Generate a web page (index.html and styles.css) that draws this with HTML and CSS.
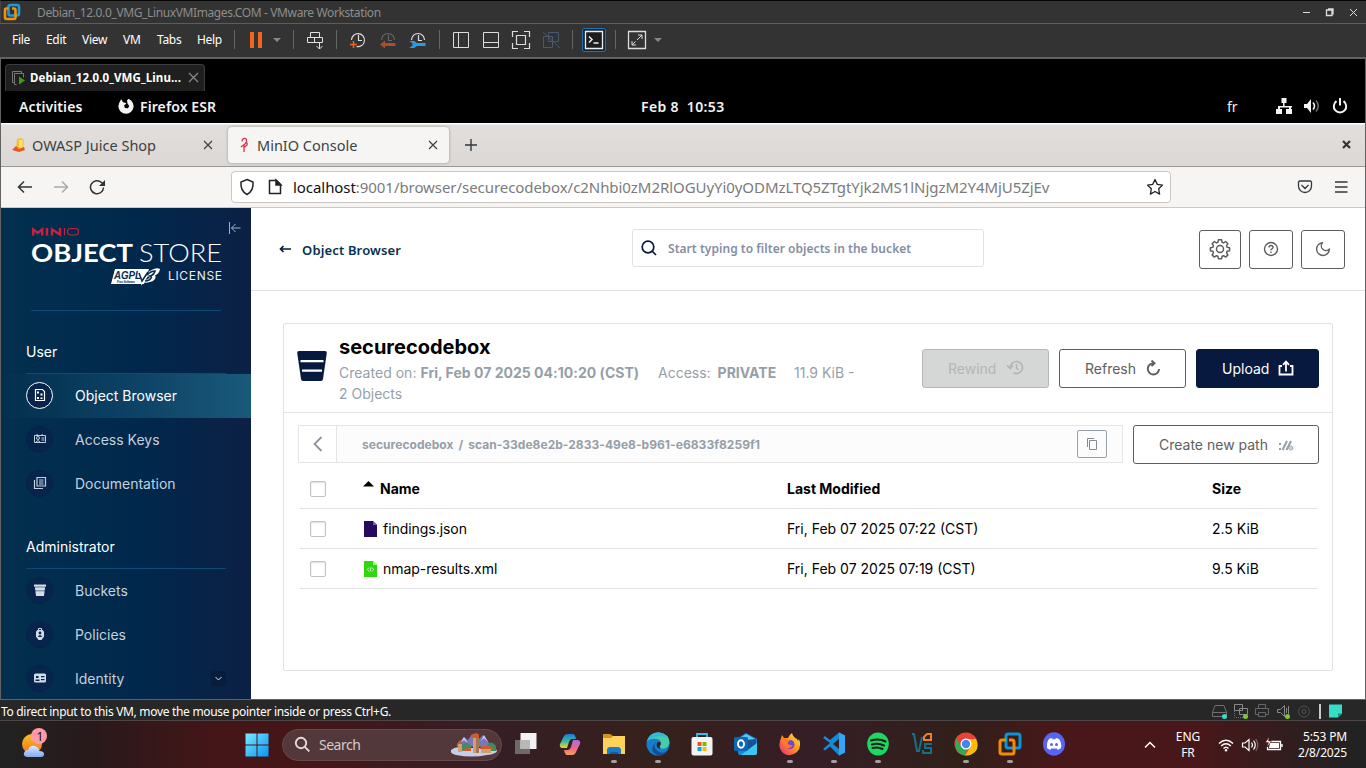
FILE: index.html
```html
<!DOCTYPE html>
<html lang="en">
<head>
<meta charset="utf-8">
<title>MinIO Console</title>
<link rel="stylesheet" href="styles.css">
</head>
<body>
<div class="screen">
<header class="titlebar">
  <svg class="vmlogo" width="18" height="18" viewBox="0 0 18 18" fill="none" stroke-width="2.6"><rect x="5.5" y="2" width="10.5" height="10.5" rx="2" stroke="#1c9ad6"/><path d="M5.5 5.5H3.500a1.500 1.500 0 0 0-1.500 1.500v7.500a1.500 1.500 0 0 0 1.500 1.500h7.500a1.500 1.500 0 0 0 1.500-1.500V7a1.500 1.500 0 0 0-1.500-1.500H9" stroke="#f29111"/></svg>
  <span class="title-text">Debian_12.0.0_VMG_LinuxVMImages.COM - VMware Workstation</span>
  <svg class="winctl" width="60" height="14" viewBox="0 0 60 14" fill="none" stroke="#ddd"><path d="M3 7.500h7"/><path d="M26.500 5h5.500v5.500h-5.500zM28 4h5v5.500" stroke-width="1.300"/><path d="M50 4l7 7M57 4l-7 7"/></svg>
</header>
<nav class="menubar">
  <span class="m-file">File</span><span class="m-edit">Edit</span><span class="m-view">View</span><span class="m-vm">VM</span><span class="m-tabs">Tabs</span><span class="m-help">Help</span>
  <i class="sep"></i>
  <svg class="tool" viewBox="0 0 20 20"><path d="M4 2h4v16H4zM12 2h4v16h-4z" fill="#f76420"/></svg>
  <svg class="caret gap" viewBox="0 0 12 20"><path d="M2 8h8l-4 4z" fill="#888"/></svg>
  <i class="sep"></i>
  <svg class="tool" viewBox="0 0 20 20" fill="none" stroke="#e0e0e0"><path d="M5.500 2.500h9v5h-9zM2.500 7.500h15v5h-15zM9.500 7.500v5M14.500 12v7M11.500 16l3 3 3-3"/></svg>
  <i class="sep"></i>
  <svg class="tool" viewBox="0 0 20 20" fill="none" stroke="#ddd" stroke-width="1.200"><path d="M3.500 10a6.500 6.500 0 1 1 5 6.500M10.500 5v5.500H14"/><path d="M5.500 11v7M2 14.500h7" stroke="#f76420" stroke-width="1.500"/></svg>
  <svg class="tool" viewBox="0 0 20 20" fill="none" stroke="#666" stroke-width="1.200"><path d="M3.500 10a6.500 6.500 0 1 1 13 0M10.500 5v5.500H14"/><path d="M6 14.500h11.500" stroke="#a8502c" stroke-width="3"/><path d="M2 14.500l5-4v8z" fill="#a8502c" stroke="none"/></svg>
  <svg class="tool" viewBox="0 0 20 20" fill="none" stroke="#ddd" stroke-width="1.200"><path d="M3.500 10a6.500 6.500 0 1 1 13 0M10.500 5v5.500H14"/><path d="M7 14.500h10.500" stroke="#2c9be0" stroke-width="3"/><path d="M3 11.500h3l2 1.500v3l-2 1.500H3l2-1.500v-3z" fill="#2c9be0" stroke="#2c9be0"/></svg>
  <i class="sep"></i>
  <svg class="tool" viewBox="0 0 20 20" fill="none" stroke="#ddd"><path d="M2.500 2.500h15v15h-15zM7.500 2.500v15"/></svg>
  <svg class="tool" viewBox="0 0 20 20" fill="none" stroke="#ddd"><path d="M2.500 2.500h15v15h-15zM2.500 12.500h15"/></svg>
  <svg class="tool" viewBox="0 0 20 20" fill="none" stroke="#ddd" stroke-width="1.200"><path d="M5.500 5.500h9v9h-9zM1.500 7V1.500H7M13 1.500h5.500V7M18.500 13v5.500H13M7 18.500H1.500V13"/></svg>
  <svg class="tool" viewBox="0 0 20 20" fill="none" stroke="#49586a"><path d="M7.500 2.500h10v9h-10zM2.500 6.500h9v11h-9zM2 2l17 16"/></svg>
  <i class="sep"></i>
  <svg class="tool wide" viewBox="0 0 26 26" fill="none" stroke="#eee"><rect x="1.500" y="1.500" width="23" height="23" rx="1.500" fill="#102638" stroke="#1f6fad"/><path d="M4.500 4.500h17v17h-17z" fill="#1d1d1d" stroke-width="1.300"/><path d="M8 9.500l3 3-3 3M12.500 16h5" stroke-width="1.500"/></svg>
  <i class="sep"></i>
  <svg class="tool" viewBox="0 0 20 20" fill="none" stroke="#ddd"><path d="M1.500 1.500h17v17h-17z" stroke-width="1.300"/><path d="M5 11v4h4M11 5h4v4M5 15l3.500-3.500M15 5l-5 5"/></svg>
  <svg class="caret" viewBox="0 0 12 20"><path d="M2 8h8l-4 4z" fill="#888"/></svg>
</nav>

<div class="vm">
<div class="vmtabs"><div class="vmtab">
  <svg width="16" height="16" viewBox="0 0 16 16" fill="none" stroke="#777"><path d="M3.500 12.500h-2v-11h9v2M5.500 14.500h-2v-11h9v4"/><path d="M8 6.500l6 4-6 4z" fill="#3f9b12" stroke="none"/></svg>
  <b>Debian_12.0.0_VMG_Linu...</b>
  <svg width="11" height="11" viewBox="0 0 11 11" stroke="#888" stroke-width="1.300"><path d="M1 1l9 9M10 1l-9 9"/></svg>
</div></div>
<div class="gnome">
  <b class="g-act">Activities</b>
  <svg width="16" height="16" viewBox="0 0 16 16"><circle cx="8" cy="8.200" r="7.600" fill="#f2f2f2"/><path d="M3.500 0L4.500 4 8.500 5.200 6 7.500 7 10l3 .2 1.200-2.200L9.500 5.500 9 2.500 11 0z" fill="#000"/><path d="M3 1l1.500 3L2 5z" fill="#f2f2f2"/></svg>
  <b class="g-app">Firefox ESR</b>
  <b class="g-date">Feb 8&nbsp; 10:53</b>
  <span class="g-lang">fr</span>
  <svg class="g-tray" width="72" height="16" viewBox="0 0 72 16" fill="#f3f3f3"><path d="M5.500 0h5v5h-2v3H16v1.500h-1V11h1v5h-6v-5h3V9.500H4V11h2v5H0v-5h2V8h5V5H5.500z"/><path d="M28 6h3l4-5v14l-4-5h-3z"/><path d="M37 4.500q3 3.500 0 7" fill="none" stroke="#f3f3f3" stroke-width="1.600"/><path d="M40 2.500q4.500 5.500 0 11" fill="none" stroke="#666" stroke-width="1.600"/><path d="M60.500 3.200a6.200 6.200 0 1 0 7 0M64 0v7.500" fill="none" stroke="#f3f3f3" stroke-width="2"/></svg>
</div>

<div class="fftabs">
  <div class="tab">
    <svg width="16" height="16" viewBox="0 0 16 16"><path d="M6 2l4-1 3 2-1 9H5z" fill="#f5c02e"/><path d="M8 3v7l3 1 1-8z" fill="#ffe46a"/><path d="M1 13l4-4 3 3 5-2 1 3-6 2z" fill="#e2582c"/></svg>
    <span class="tab-a">OWASP Juice Shop</span>
    <svg width="10" height="10" viewBox="0 0 10 10" stroke="#3c4144" stroke-width="1.200"><path d="M1 1l8 8M9 1L1 9"/></svg>
  </div>
  <div class="tab active">
    <svg width="16" height="16" viewBox="0 0 16 16" fill="none" stroke="#d73352"><path d="M6 4.500q0-2.500 2-3t2.500 1.500-1 3.500L5 10M9 6q3-1 2 2l-3 2.500M8 8v7" stroke-width="1.300"/></svg>
    <span class="tab-b">MinIO Console</span>
    <svg width="10" height="10" viewBox="0 0 10 10" stroke="#3c4144" stroke-width="1.200"><path d="M1 1l8 8M9 1L1 9"/></svg>
  </div>
  <svg class="newtab" width="12" height="12" viewBox="0 0 12 12" stroke="#33393b" stroke-width="1.400"><path d="M6 0v12M0 6h12"/></svg>
  <svg class="ffclose" width="9" height="9" viewBox="0 0 9 9" stroke="#2e3436" stroke-width="2.200"><path d="M1 1l7 7M8 1L1 8"/></svg>
</div>
<div class="fftools">
  <svg width="90" height="16" viewBox="0 0 90 16" fill="none" stroke="#2e3436" stroke-width="1.500"><path d="M15 8H1.500M7 2.500L1.500 8 7 13.500"/><path d="M37 8h13.500M45 2.500L50.500 8 45 13.500" stroke="#aaa"/><path d="M86.500 8.500a6.500 6.500 0 1 1-2-5l2 1.500"/><path d="M88 1v6h-6z" fill="#2e3436" stroke="none"/></svg>
  <div class="url">
    <svg width="44" height="18" viewBox="0 0 44 18" fill="none" stroke="#222" stroke-width="1.500"><path d="M8 1.500l6 2.500c.5 5-1.500 10-6 12.500C3.500 14 1.500 9 2 4z"/><path d="M30.500 2.500h7l4 4v9h-11z"/><path d="M37 2v5h5z" fill="#222"/></svg>
    <span class="url-text"><em>localhost</em>:9001/browser/securecodebox/c2Nhbi0zM2RlOGUyYi0yODMzLTQ5ZTgtYjk2MS1lNjgzM2Y4MjU5ZjEv</span>
    <svg class="star" width="18" height="18" viewBox="0 0 18 18" fill="none" stroke="#222" stroke-width="1.300" stroke-linejoin="round"><path d="M9 1.500l2.300 4.900 5.200.7-3.800 3.700.9 5.300L9 13.500l-4.600 2.600.9-5.300L1.500 7.100l5.200-.7z"/></svg>
  </div>
  <svg class="pocket" width="54" height="16" viewBox="0 0 54 16" fill="none" stroke="#33393b" stroke-width="1.300"><path d="M2.500 2h11l1 1v4a6.500 6.500 0 0 1-13 0V3zM4.500 6L8 9.500 11.500 6"/><path d="M38 3h12.500M38 8h12.500M38 13h12.500"/></svg>
</div>

<div class="console">
<aside class="side">
  <svg class="brand" width="210" height="70" viewBox="0 0 210 70">
    <g fill="none" stroke="#c9203f" stroke-width="2.400"><path d="M2.200 17.500V11.500l4.500 3.500 4.500-3.500v6M16 10v7.500M21 17.500v-6l8 5V10"/><path d="M33.500 10v7.500" stroke-width="1"/><rect x="36.500" y="10.500" width="11" height="6.500" rx="3.200" stroke-width="1.200"/></g>
    <text x="0" y="44" class="lg-bold" textLength="102" lengthAdjust="spacingAndGlyphs">OBJECT</text>
    <text x="108" y="44" class="lg-thin" textLength="83" lengthAdjust="spacingAndGlyphs">STORE</text>
    <path d="M84 51h34l-5 15H80z" fill="#fff"/>
    <text x="83" y="61" class="lg-ag" textLength="27" lengthAdjust="spacingAndGlyphs">AGPL</text><text x="86" y="65.300" class="lg-fs" textLength="18">Free Software</text>
    <path d="M110 54l1 11 8-11q6-4 9-2.500-1 4-5 5.500 2 3-2 5.500-5 2-9 1 7-1 8-5l-3-1" fill="#fff" stroke="#fff" stroke-width="1.800"/><path d="M108 55l3 8 6-9M116 57q4-4 8-4-1 4-5 5 3 1-1 4-2 1-4 1" fill="none" stroke="#062c50" stroke-width="1.600"/>
    <text x="137" y="62" class="lg-lic" textLength="54">LICENSE</text>
    <path d="M198.500 4v12M209.500 10h-9M204.500 6l-4 4 4 4" fill="none" stroke="#9fb3c5"/>
  </svg>
  <div class="rule"></div>
  <div class="group first">User</div>
  <div class="item on"><i class="dot"><svg viewBox="0 0 14 14" fill="none" stroke="#fff" stroke-width="1.200"><path d="M2.500 1.500h7l2 2v9h-9z"/><path d="M4 3.500h2v2H4zM7.500 5.500h2v2h-2zM4 9h2v2H4zM7.500 9.500h2v1.500h-2z" fill="#fff" stroke="none"/></svg></i><span>Object Browser</span></div>
  <div class="item"><i class="dot"><svg viewBox="0 0 14 14" fill="none" stroke="#c4d0dc"><path d="M1.500 3.500h11v7h-11zM4 2v2M9 2v2M8.500 6h3M8.500 8h3"/><circle cx="5" cy="6" r="1.500"/><path d="M3 10q2-3 4 0"/></svg></i><span>Access Keys</span></div>
  <div class="item"><i class="dot"><svg viewBox="0 0 14 14" fill="none" stroke="#c4d0dc" stroke-width="1.200"><path d="M4 1.500h8.500v8.500H4zM1.500 4v8.500H10M6 4h4.500M6 6h4.500M6 8h4.500"/></svg></i><span>Documentation</span></div>
  <div class="group second">Administrator</div>
  <div class="item"><i class="dot"><svg viewBox="0 0 14 14" fill="#d3dde7"><path d="M1 1.500h12v2.200H1z"/><path d="M2 3.700h10l-1 9.300H3z" opacity=".65"/><path d="M2 4.700h10l-.3 2.300H2.300zM2.600 8.500h8.800L10.900 13H3.100z"/></svg></i><span>Buckets</span></div>
  <div class="item"><i class="dot"><svg viewBox="0 0 14 14"><path d="M5.500 3.500V1.500h3v2" fill="none" stroke="#d3dde7"/><path d="M3 4.500L4.500 3h5L11 4.500v5L8.500 13h-3L3 9.500z" fill="#d3dde7"/><circle cx="7" cy="6" r="1.400" fill="#07244c"/><path d="M4.800 10q2.200-4 4.400 0z" fill="#07244c"/></svg></i><span>Policies</span></div>
  <div class="item"><i class="dot"><svg viewBox="0 0 14 14"><rect x="1" y="2.500" width="12" height="9" rx="1.500" fill="#d3dde7"/><path d="M3 5h2.500v2H3zM2.500 8.500h4V10h-4zM8 5h3.500v1.200H8zM8 8h3.500v1.200H8z" fill="#07244c"/></svg></i><span>Identity</span><i class="more"><svg width="9" height="9" viewBox="0 0 9 9" fill="none" stroke="#dce5ee"><path d="M1.500 3l3 3 3-3"/></svg></i></div>
</aside>
<main class="main">
  <div class="pagehead">
    <svg width="14" height="12" viewBox="0 0 14 12" fill="none" stroke="#07193e" stroke-width="1.700"><path d="M13 6H2.500M5.500 3l-3 3 3 3"/></svg>
    <b class="crumb">Object Browser</b>
    <div class="search"><svg width="18" height="18" viewBox="0 0 18 18" fill="none" stroke="#07193e" stroke-width="1.700"><circle cx="7" cy="8" r="5.800"/><path d="M11 12l4 4"/></svg><b>Start typing to filter objects in the bucket</b></div>
    <div class="ibtn b1"><svg width="22" height="22" viewBox="0 0 22 22" fill="none" stroke="#5e5e5e" stroke-width="1.500" stroke-linejoin="round"><path d="M9.400 1.800h3.200l.5 2.500 1.500.6 2.100-1.400 2.200 2.200-1.400 2.100.6 1.500 2.500.5v3l-2.500.5-.6 1.500 1.400 2.100-2.200 2.200-2.100-1.400-1.500.6-.5 2.400H9.400l-.5-2.400-1.500-.6-2.100 1.400-2.200-2.200 1.400-2.100-.6-1.500-2.500-.5v-3l2.500-.5.6-1.500-1.400-2.100 2.200-2.200 2.100 1.400 1.500-.6z"/><circle cx="11" cy="11" r="3.500"/></svg></div>
    <div class="ibtn"><svg width="16" height="16" viewBox="0 0 16 16" fill="none" stroke="#5e5e5e" stroke-width="1.400"><circle cx="8" cy="8" r="6.500"/><path d="M6 6.500Q6 4.500 8 4.500t2 2Q10 7.500 8 8.500v.8M8 10.500v1.500"/></svg></div>
    <div class="ibtn"><svg width="16" height="16" viewBox="0 0 16 16" fill="none" stroke="#5e5e5e" stroke-width="1.400" stroke-linejoin="round"><path d="M7.500 1.700A6.400 6.400 0 1 0 14.400 8 4.200 4.200 0 0 1 7.500 1.700z"/></svg></div>
  </div>
  <section class="card">
    <div class="cardhead">
      <svg class="bucket" width="30" height="30" viewBox="0 0 30 30"><path d="M2 0h26q2 0 1.800 2L26 28q-.3 2-2 2H6q-1.700 0-2-2L.2 2Q0 0 2 0z" fill="#07193e"/><path d="M3.500 10.200h23M5 19.700h20" stroke="#fff" stroke-width="2.200"/></svg>
      <div class="info"><h1>securecodebox</h1>
        <p><span class="i-cr">Created on: <b>Fri, Feb 07 2025 04:10:20 (CST)</b></span><span class="i-ac">Access: <b>PRIVATE</b></span><span>11.9 KiB -</span></p><p>2 Objects</p></div>
      <div class="btn off"><span>Rewind</span><svg width="18" height="16" viewBox="0 0 18 16" fill="none" stroke="#b4b5b5" stroke-width="1.700"><path d="M4.500 7.500a6 6 0 1 1 3 5.200M1 5.500L4.500 8.500 7 5.500M10.500 4v4l2 2"/></svg></div>
      <div class="btn"><span>Refresh</span><svg width="16" height="16" viewBox="0 0 16 16" fill="none" stroke="#5e5e5e" stroke-width="1.900"><path d="M9 3.300a5.600 5.600 0 1 0 5 5.700M6.500.5l3 2.800-3 2.800"/></svg></div>
      <div class="btn up"><span>Upload</span><svg width="16" height="16" viewBox="0 0 16 16" fill="none" stroke="#fff" stroke-width="1.800"><path d="M4 6H1.500v8.500h13V6H12M8 11.500V2M5 4.800L8 1.600l3 3.200"/></svg></div>
    </div>
    <div class="pathrow">
      <div class="path"><div class="back"><svg width="10" height="16" viewBox="0 0 10 16" fill="none" stroke="#8b949d" stroke-width="1.800"><path d="M8.500 1L1.500 8l7 7"/></svg></div><b>securecodebox<i>/</i>scan-33de8e2b-2833-49e8-b961-e6833f8259f1</b>
      <div class="copy"><svg width="12" height="14" viewBox="0 0 12 14" fill="none" stroke="#858b95"><path d="M3.500 3.500h7v9h-7zM1.500 10V1.500H8"/></svg></div></div>
      <div class="btn newpath"><span>Create new path</span><svg width="16" height="12" viewBox="0 0 16 12" fill="none" stroke="#969fa8"><path d="M1 5h2M1 10h2" stroke-width="2"/><path d="M4.500 11l4.500-9M8.500 11L13 2" stroke-width="2"/><circle cx="12.800" cy="9" r="2"/><path d="M11.800 9h2"/></svg></div>
    </div>
    <div class="table">
      <div class="row head"><i class="cb"></i><span class="c-name"><svg width="12" height="6" viewBox="0 0 12 6"><path d="M0 5.500L5.500 0 11 5.500z"/></svg><b>Name</b></span><b class="c-mod">Last Modified</b><b>Size</b></div>
      <div class="row"><i class="cb"></i><span class="c-name"><svg width="14" height="16" viewBox="0 0 14 16"><path d="M0 0h9l4 4v12H0z" fill="#25095f"/><path d="M9 0v4h4z" fill="#7858b6"/></svg><span>findings.json</span></span><span class="c-mod">Fri, Feb 07 2025 07:22 (CST)</span><span>2.5 KiB</span></div>
      <div class="row"><i class="cb"></i><span class="c-name"><svg width="14" height="16" viewBox="0 0 14 16"><path d="M0 0h9l4 4v12H0z" fill="#31d610"/><path d="M9 0v4h4z" fill="#a2f37f"/><path d="M5 6.500L3.500 8.500 5 10.500M8 6.500l1.500 2L8 10.500M7 6.500l-1 4" fill="none" stroke="#d9ffd0" stroke-width=".8"/></svg><span>nmap-results.xml</span></span><span class="c-mod">Fri, Feb 07 2025 07:19 (CST)</span><span>9.5 KiB</span></div>
    </div>
  </section>
</main>
</div>
</div>

<div class="status"><span>To direct input to this VM, move the mouse pointer inside or press Ctrl+G.</span>
  <svg width="134" height="18" viewBox="0 0 134 18" fill="none" stroke="#707070"><path d="M.5 14.500v-4l2.500-7h9l2.500 7v4zM.5 10.500h14"/><circle cx="12.500" cy="14.500" r="2.500" fill="#35dccb" stroke="none"/><path d="M22.500 2.500h8v6h-8zM27.500 6.500h8v6h-8z" stroke="#888"/><path d="M22.500 9v6.500H32" stroke-dasharray="1 1"/><circle cx="33.500" cy="14.500" r="2.500" fill="#83c623" stroke="none"/><path d="M46.500 6.500v-4h7v4M46 12.500h-2.500v-6h13v6H54M46.500 10.500h7v4h-7z" stroke="#666"/><path d="M65.500 7.500h3l4-4v11l-4-4h-3zM74.500 6v5M76.500 4v8" stroke="#888"/><circle cx="75.500" cy="14.500" r="2.500" fill="#83c623" stroke="none"/><circle cx="92" cy="9.500" r="5.500" stroke="#555"/><circle cx="92" cy="9.500" r="2" stroke="#555"/><path d="M108 2v15" stroke="#fff" stroke-width="1.500"/><path d="M117 2.500h13v9l-4 4h-9z" fill="#38ddc9" stroke="none"/><path d="M126 15.500v-4h4z" fill="#26877e" stroke="none"/></svg>
</div>
<footer class="taskbar">
  <svg class="weather" width="32" height="34" viewBox="0 0 32 34"><defs><linearGradient id="sun" x2="0" y2="1"><stop stop-color="#f8bd2b"/><stop offset="1" stop-color="#ef7818"/></linearGradient><linearGradient id="cl" x2="0" y2="1"><stop stop-color="#d7e8ff"/><stop offset="1" stop-color="#83aaf0"/></linearGradient></defs><circle cx="14" cy="17" r="10" fill="url(#sun)"/><path d="M9 30q-4-1-3-4t4-3q2-5 7-4 4 1 4 5 5 0 5 3t-3 3z" fill="url(#cl)"/><circle cx="21" cy="9" r="8" fill="#ff99a4"/><text x="22" y="13.500" text-anchor="middle" class="badge-n">1</text></svg>
  <svg class="start" width="24" height="24" viewBox="0 0 24 24"><defs><linearGradient id="win" x2="1" y2="1"><stop stop-color="#78eaff"/><stop offset="1" stop-color="#0a93f5"/></linearGradient></defs><path d="M.5.500h11v11H.5zM12.500.500h11v11h-11zM.5 12.500h11v11H.5zM12.500 12.500h11v11h-11z" fill="url(#win)"/></svg>
  <div class="tsearch"><svg width="17" height="17" viewBox="0 0 17 17" fill="none" stroke="#e4dcdc" stroke-width="1.900"><circle cx="7" cy="7" r="5.200"/><path d="M10.800 10.800l4.500 4.500"/></svg><span>Search</span>
    <svg class="castle" width="48" height="24" viewBox="0 0 48 24"><path d="M6 13l8-9 4 3 4-6 6 6 5-5 5 6 3 6z" fill="#7777ba"/><path d="M14 4l4 6-4-3-3 2zM34 2l4 7-4-4-3 3z" fill="#cfccf5"/><path d="M1 17q5-4 10-2h26q9-1 10 3-1 3-10 4-15 3-31 0Q0 21 1 17z" fill="#c5d0e8"/><path d="M12 12q5-5 9 1v5h-9zM37 13q4-7 9 0v5h-9z" fill="#3d8d61"/><path d="M23 3h6v17h-6zM31 15h10v5H31zM8 11h4v8H8z" fill="#d29e6e"/><path d="M26 3h3v17h-3z" fill="#a37552"/><path d="M22 5V1.500l4-1.500 3 1.500V5zM7 11l3-4 3 4zM29 16l3-3h8l3 3zM12 18l4-3h5v3z" fill="#d35a2c"/></svg>
  </div>
  <div class="apps">
    <div class="app"><svg viewBox="0 0 24 24"><path d="M1 8h15v14H1z" fill="#6b6b69"/><path d="M6.500 1h16v16h-16z" fill="#f2f2f2"/><path d="M6.500 8H16v9H6.500z" fill="#b8b8b8"/></svg></div>
    <div class="app"><svg viewBox="0 0 24 24"><defs><linearGradient id="ca" x2="0" y2="1"><stop stop-color="#1d7be0"/><stop offset=".5" stop-color="#35b9a0"/><stop offset="1" stop-color="#eed42c"/></linearGradient><linearGradient id="cb" x2="0" y2="1"><stop stop-color="#a56be6"/><stop offset=".5" stop-color="#ee6390"/><stop offset="1" stop-color="#f6a057"/></linearGradient></defs><path d="M6 4q1-2 4-2h5q2 0 3 5h-4q-2 0-3 3l-2 6H4q-3-1-2-4z" fill="url(#ca)"/><path d="M18 20q-1 3-4 3H9q-2 0-3-5h4q2 0 3-3l2-7h5q3 1 2 4z" fill="url(#cb)"/></svg></div>
    <div class="app run"><svg viewBox="0 0 24 24"><path d="M1 2h7l3 2h12v18H1z" fill="#d69518"/><path d="M1 6h8l2-2h12v18H1z" fill="#fed15b"/><path d="M5 22v-5l2-2h10l2 2v5z" fill="#177dce"/><path d="M8 20h8v2H8z" fill="#0f5da7"/></svg></div>
    <div class="app run"><svg viewBox="0 0 24 24"><circle cx="12" cy="12" r="11.500" fill="#177cc9"/><path d="M1 9Q4 0 13 .500q10 1 10.500 10-1 7-8 6-3-1-1-3Q16 8 11 7 5 6 1 9z" fill="#43cda8"/><path d="M1 9Q4 1 12 .500q6 0 9 5Q11 2 1 9z" fill="#35b6df"/><path d="M10 10q-4 6 3 10 5 2 9-2-4 7-11 5Q2 19 10 10z" fill="#134e94"/><path d="M11 11q3-3 4 1-3 3 0 5-6-1-4-6z" fill="#342027"/></svg></div>
    <div class="app"><svg viewBox="0 0 24 24"><path d="M7 6V2h10v4" fill="none" stroke="#38bdeb" stroke-width="1.800"/><rect x="1.500" y="5" width="21" height="18.500" rx="2" fill="#f3f3f3"/><path d="M7.500 10h4v4h-4z" fill="#f25022"/><path d="M12.500 10h4v4h-4z" fill="#7fba00"/><path d="M7.500 15h4v4h-4z" fill="#00a4ef"/><path d="M12.500 15h4v4h-4z" fill="#ffb900"/></svg></div>
    <div class="app"><svg viewBox="0 0 24 24"><path d="M4 6l8-5 11 6v14q0 2-2 2H6q-2 0-2-2z" fill="#1687d9"/><path d="M6 6l6-4 9 5v5H6z" fill="#58c9f3"/><path d="M12 8l10-1v6l-8 5z" fill="#185292"/><path d="M7 23l16-12v10q0 2-2 2z" fill="#3ac8ef"/><rect y="5" width="14" height="14" rx="1.500" fill="#0d67b8"/><ellipse cx="7" cy="12" rx="3" ry="3.800" fill="none" stroke="#fff" stroke-width="1.900"/></svg></div>
    <div class="app run"><svg viewBox="0 0 24 24"><defs><linearGradient id="fx" x1="1" x2="0" y2="1"><stop stop-color="#fff04c"/><stop offset=".45" stop-color="#ff981f"/><stop offset="1" stop-color="#ed207b"/></linearGradient></defs><path d="M3 6l1-3 2 3 4 0q1-3 4-5 1 4 5 6l1 2 1-2q3 8-2 13-7 6-14 1-6-6-2-15z" fill="url(#fx)"/><circle cx="12" cy="12.500" r="4.500" fill="#7347cd"/><path d="M4 8q4-3 8 1-3 1-2 3 2 2 5 1-3 5-8 2-3-3-3-7z" fill="#ff7928"/></svg></div>
    <div class="app run"><svg viewBox="0 0 24 24"><path d="M17 .500l6 3v17l-6 3-9-9-5 4-2-1.500L8 11 1 6l2-2 5 4zM17 7l-6 5 6 5z" fill="#168ad3" fill-rule="evenodd"/><path d="M17 .500l6 3v17l-6 3z" fill="#36a4ef"/></svg></div>
    <div class="app run"><svg viewBox="0 0 24 24" fill="none"><ellipse cx="12" cy="12" rx="10.800" ry="11.500" fill="#1ed760"/><path d="M5 8.500q8-2.500 14.500 1M6 12.500q6-2 12 1M6.500 16q5-1.500 10 1" stroke="#171d1a" stroke-width="2" stroke-linecap="round"/></svg></div>
    <div class="app"><svg viewBox="0 0 24 24" fill="none" stroke-width="2"><path d="M2 2H4l3 17h2l3-14M22 12h-7v4h6v5h-8v-3" stroke="#167083"/><path d="M14 8V5l3-3h4v6z" stroke="#eb8325"/></svg></div>
    <div class="app run"><svg viewBox="0 0 24 24"><circle cx="12" cy="12" r="11.500" fill="#ea4335"/><path d="M2 6l5 8 6 3-2 6.500Q-2 21 2 6z" fill="#34a853"/><path d="M22 7q5 12-6 16l-5 .5L17 14q0-4-5-7z" fill="#fbbc05"/><circle cx="12" cy="12" r="5.500" fill="#fff"/><circle cx="12" cy="12" r="4.200" fill="#4285f4"/></svg></div>
    <div class="app run"><svg viewBox="0 0 24 24" fill="none" stroke-width="3"><rect x="8" y="2" width="14" height="14" rx="2" stroke="#0796d6"/><path d="M8 8H4q-2 0-2 2v10q0 2 2 2h10q2 0 2-2V10q0-2-2-2h-3" stroke="#f38b00"/></svg></div>
    <div class="app"><svg viewBox="0 0 24 24"><ellipse cx="12" cy="12" rx="11" ry="11.800" fill="#5865f2"/><path d="M8 6.500l2-.5.7 1.200h2.600L14 6l3 1q3 4 2 9l-3 2-1.200-1.500h-5.600L8 18l-3-2Q4.500 10 7 7z" fill="#fff"/><circle cx="9.500" cy="12.500" r="1.500" fill="#5865f2"/><circle cx="14.500" cy="12.500" r="1.500" fill="#5865f2"/></svg></div>
  </div>
  <svg class="chev" width="12" height="8" viewBox="0 0 12 8" fill="none" stroke="#fff" stroke-width="1.500"><path d="M1 6.500l5-5 5 5"/></svg>
  <div class="lang">ENG<br>FR</div>
  <svg class="tray" width="66" height="18" viewBox="0 0 66 18" fill="none" stroke="#fff" stroke-width="1.500"><path d="M1 7.500q7-6.500 14 0M3.200 10q4.800-4.500 9.600 0M5.500 12.500q2.500-2.500 5 0"/><circle cx="8" cy="14.300" r="1.200" fill="#fff" stroke="none"/><path d="M24.500 7h2.500l4-3.500v11L27 11h-2.500zM33.500 6.500q2 2.500 0 5M35.500 4.500q3.500 4.500 0 9" stroke-width="1.200"/><path d="M37.800 3q4 6 0 12" stroke="#8b6262" stroke-width="1.200"/><path d="M53 5.500h9.500v8h-13V11M64 8v3" stroke-width="1.300"/><path d="M52 7h9v5H51z" fill="#fff" stroke="none"/><path d="M51 1l-3.500 5.500h3L49 11l4.500-6h-3z" fill="#fff" stroke="#501a1d" stroke-width=".5"/></svg>
  <div class="clock">5:53 PM<br>2/8/2025</div>
</footer>
</div>
</body>
</html>
```
FILE: styles.css
```css
* { box-sizing: border-box; }
body { margin: 0; background: #000; }
i, em { font-style: normal; }
svg { display: block; flex: none; }
.screen { width: 1366px; height: 768px; overflow: hidden; display: flex; flex-direction: column; white-space: nowrap; font-family: "Noto Sans", "Open Sans", sans-serif; }
.titlebar { height: 23px; flex: none; background: #333; border-top: 1px solid #050505; border-left: 1px solid #444; display: flex; align-items: center; padding: 0 6px 0 2px; font-size: 12px; color: #8d8d8d; }
.title-text { margin-left: 16px; letter-spacing: -.38px; flex: 1; }
.menubar { height: 34px; flex: none; background: #333; border-top: 1px solid #5d5d5d; display: flex; align-items: center; padding: 0 0 2px 12px; font-size: 12px; color: #fff; letter-spacing: -.3px; }
.menubar span { flex: none; }
.m-file { width: 34px; }
.m-edit { width: 36px; }
.m-view { width: 41px; }
.m-vm { width: 34px; }
.m-tabs { width: 40px; }
.m-help { width: 31px; }
.sep { width: 1px; height: 19px; background: #666; margin: 0 6px; flex: none; }
.tool { width: 20px; height: 20px; margin: 0 5px; }
.tool.wide { width: 26px; height: 26px; margin: 0 2px; }
.caret { width: 12px; height: 20px; }
.caret.gap { margin-right: 4px; }
.vm { flex: 1; min-height: 0; background: #000; border: solid #626262; border-width: 2px 1px 1px; display: flex; flex-direction: column; }
.vmtabs { height: 32px; flex: none; padding: 5px 0 0 4px; }
.vmtab { width: 200px; height: 27px; background: #1f1f1f; border: 1px solid #3c3c3c; border-bottom: 0; border-radius: 4px 4px 0 0; display: flex; align-items: center; padding: 0 0 1px 5px; color: #fff; font-size: 11.5px; }
.vmtab b { width: 161px; padding-left: 3px; letter-spacing: .1px; }
.gnome { height: 32px; flex: none; display: flex; align-items: center; padding: 0 0 2px 18px; font-size: 14px; color: #f3f3f3; }
.gnome b { font-weight: 600; flex: none; letter-spacing: .1px; }
.gnome .g-act { width: 99px; }
.gnome .g-app { width: 507px; padding-left: 6px; }
.gnome .g-date { width: 586px; letter-spacing: .35px; }
.g-lang { width: 27px; }
.g-tray { margin-left: 22px; }
.fftabs { height: 44px; flex: none; background: linear-gradient(#fff 1px, #e1dedb 2px, #dcd8d5); border-bottom: 1px solid #9b9794; display: flex; align-items: center; color: #3c4245; font-size: 14.5px; }
.tab { width: 227px; height: 36px; display: flex; align-items: center; padding-left: 10px; flex: none; }
.tab-a, .tab-b { width: 171px; margin-left: 5px; }
.tab.active { width: 221px; background: #f6f5f4; border-radius: 4px; box-shadow: 0 0 3px #99948f; padding-left: 8px; }
.newtab { margin-left: 16px; }
.ffclose { margin-left: auto; margin-right: 14px; }
.fftools { height: 41px; flex: none; background: #f6f5f4; border-bottom: 1px solid #cdc7c2; display: flex; align-items: center; padding-left: 16px; }
.url { width: 940px; height: 32px; margin-left: 124px; background: #fff; border: 1px solid #cdc7c2; border-radius: 4px; display: flex; align-items: center; padding-left: 7px; font-size: 15px; color: #7b7b7b; }
.url em { color: #111; }
.url-text { width: 863px; margin-left: 10px; letter-spacing: -.06px; flex: none; }
.star { margin-left: -10px; }
.pocket { margin-left: 126px; }
.console { flex: 1; min-height: 0; display: flex; font-family: Inter, Roboto, sans-serif; background: #fff; }
.side { width: 250px; flex: none; overflow: hidden; background: linear-gradient(90deg, #03304f, #00284c 55%, #0c2045); color: #c4d0dc; font-size: 14px; padding-top: 10px; }
.brand { margin-left: 30px; }
.lg-bold { font: 700 25px Lato, sans-serif; fill: #fff; }
.lg-thin { font: 300 25px Lato, sans-serif; fill: #fff; }
.lg-ag { font: italic 700 11px "Liberation Sans", sans-serif; fill: #062c50; }
.lg-fs { font: italic 700 3px "Liberation Sans", sans-serif; fill: #062c50; }
.lg-lic { font: 400 12px Inter, sans-serif; fill: #e9eef3; }
.rule { height: 1px; background: #0f4a77; margin: 22px 30px 0; }
.group { height: 44px; margin: 19px 25px 0; border-bottom: 1px solid #0f4a77; line-height: 44px; color: #fff; }
.group.second { margin-top: 19px; }
.item { height: 44px; display: flex; align-items: center; padding: 0 0 2px 25px; }
.item span { margin-left: 22px; }
.item.on { background: linear-gradient(90deg, #03304f00, #185a7b); color: #fff; }
.dot { width: 27px; height: 27px; border-radius: 50%; background: #07244c; border: 1px solid #062247; display: flex; align-items: center; justify-content: center; flex: none; }
.on .dot { border: 1px solid #fff; }
.dot svg { width: 14px; height: 14px; }
.more { width: 15px; height: 15px; background: #0a1c3c; margin-left: auto; margin-right: 25px; display: flex; align-items: center; justify-content: center; border-radius: 2px; }
.main { flex: 1; background: #fff; }
.pagehead { height: 83px; border-bottom: 1px solid #e2e2e2; display: flex; align-items: center; padding: 0 20px 0 27px; }
.crumb { width: 330px; margin: 2px 0 0 10px; font: 600 13px "Noto Sans", sans-serif; letter-spacing: .15px; color: #073052; flex: none; }
.search { width: 352px; height: 38px; margin-top: -3px; border: 1px solid #e2e2e2; border-radius: 3px; display: flex; align-items: center; padding-left: 8px; gap: 9px; flex: none; }
.search b { font: 600 12px "Noto Sans", sans-serif; letter-spacing: .04px; color: #858da3; margin-top: 1px; }
.ibtn { width: 44px; height: 39px; margin-left: 8px; border: 1px solid #5e5e5e; border-radius: 3px; display: flex; align-items: center; justify-content: center; flex: none; }
.ibtn.b1 { width: 42px; margin-left: auto; }
.card { margin: 32px 32px 0; width: 1050px; height: 348px; border: 1px solid #e2e2e2; border-radius: 2px; }
.cardhead { height: 89px; border-bottom: 1px solid #e2e2e2; display: flex; align-items: center; padding-left: 13px; }
.bucket { margin-top: -5px; }
.info { width: 595px; padding-left: 12px; flex: none; color: #969fa8; font-size: 14px; margin-top: 1px; }
h1 { margin: 0; font-size: 20px; line-height: 27px; height: 28px; color: #000; font-weight: 700; }
p { margin: 0; line-height: 21px; height: 21px; display: flex; }
.i-cr { width: 319px; letter-spacing: .02px; }
.i-ac { width: 136px; }
.i-ac b { margin-left: 3px; }
.btn { width: 127px; height: 39px; margin-left: 10px; border: 1px solid #5e5e5e; border-radius: 3px; display: flex; align-items: center; padding: 0 24px 0 25px; font-size: 14px; color: #5e5e5e; flex: none; justify-content: space-between; }
.btn.off { margin-left: 0; background: #d5d7d7; border-color: #b4b5b5; color: #b4b5b5; }
.btn.up { width: 123px; background: #07193e; border-color: #07193e; color: #fff; }
.pathrow { display: flex; padding: 12px 0 0 14px; }
.path { width: 825px; height: 38px; border: 1px solid #e5e5e5; background: #fcfcfc; display: flex; align-items: center; color: #969fa8; font-size: 12px; }
.path b { font-weight: 700; margin-left: 25px; letter-spacing: .04px; }
.path b i { margin: 0 5px; }
.back { width: 38px; height: 36px; background: #fff; border-right: 1px solid #e5e5e5; display: flex; align-items: center; justify-content: center; }
.copy { width: 30px; height: 28px; border: 1px solid #969fa8; border-radius: 2px; margin-left: auto; margin-right: 15px; display: flex; align-items: center; justify-content: center; }
.btn.newpath { width: 186px; }
.table { margin: 5px 0 0 16px; width: 1018px; font-size: 14px; color: #000; }
.row { height: 40px; border-bottom: 1px solid #e2e2e2; display: flex; align-items: center; padding-left: 10px; }
.cb { width: 16px; height: 16px; border: 1px solid #c1c1c1; border-radius: 2px; background: #fff; box-shadow: inset 0 1px 2px #ddd; flex: none; }
.c-name { width: 424px; margin-left: 37px; display: flex; align-items: center; flex: none; }
.row:not(.head) .c-name { padding-left: 1px; letter-spacing: -.05px; }
.c-name > span, .c-name > b { margin-left: 5px; }
.head svg { margin-top: -9px; }
.c-mod { width: 425px; flex: none; }
.status { height: 20px; flex: none; background: #272727; display: flex; align-items: center; justify-content: space-between; padding: 2px 20px 0 1px; color: #fff; font-size: 12px; letter-spacing: -.31px; }
.taskbar { height: 48px; flex: none; display: flex; align-items: center; border-top: 1px solid #4e4546; font-size: 12px; color: #fff; background: linear-gradient(90deg, #222 0, #28191b 90px, #451618 220px, #451618 300px, #351e25 490px, #35211c 650px, #351e26 820px, #302019 960px, #481719 1060px, #481719 1200px, #222 1350px); }
.weather { margin: -2px 0 0 18px; }
.badge-n { font: 12px "Noto Sans", sans-serif; fill: #111; }
.start { margin-left: 195px; }
.tsearch { width: 220px; height: 32px; margin-left: 13px; border: 1px solid #66484a; border-radius: 16px; background: #52383b; display: flex; align-items: center; padding-left: 11px; color: #d5cbcb; font-size: 14px; flex: none; }
.tsearch span { margin-left: 8px; width: 131px; letter-spacing: -.5px; }
.apps { display: flex; margin-left: 2px; flex: none; }
.app { width: 44px; height: 47px; display: flex; flex-direction: column; align-items: center; padding-top: 11px; }
.app svg { width: 24px; height: 24px; }
.run::after { content: ""; width: 6px; height: 3px; border-radius: 2px; background: #a49d9c; margin-top: 4px; }
.chev { margin-left: 68px; }
.lang { width: 60px; text-align: center; line-height: 16px; margin-left: 2px; flex: none; }
.clock { width: 63px; text-align: right; line-height: 16px; letter-spacing: -.15px; }
```
